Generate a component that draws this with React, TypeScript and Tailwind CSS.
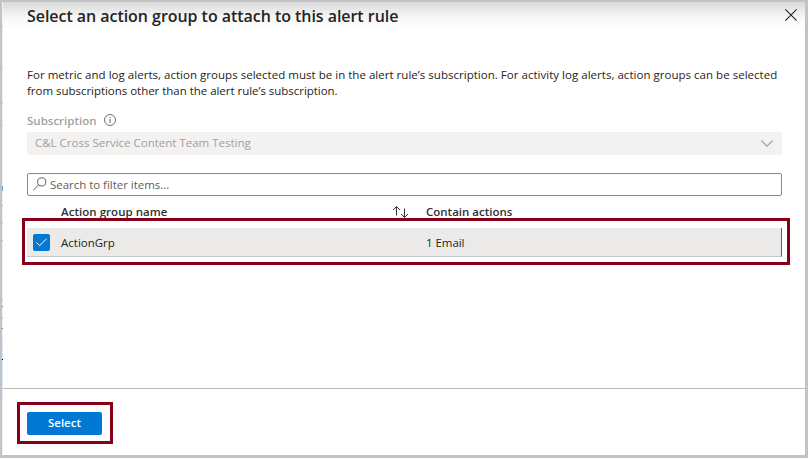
import type { ReactNode } from "react";

const SLIVER_MARKS = [
  "top-[24px] h-px bg-[#c8c8c8]",
  "top-[66px] h-px bg-[#c8c8c8]",
  "top-[101px] h-px bg-[#c8c8c8]",
  "top-[123px] h-px bg-[#c8c8c8]",
  "top-[184px] h-[5px] bg-[#4c9fe0]",
  "top-[203px] h-px bg-[#b0b0b0]",
  "top-[220px] h-[2px] bg-[#b5d8f5]",
  "top-[238px] h-px bg-[#b0b0b0]",
  "top-[297px] h-px bg-[#b0b0b0]",
  "top-[304px] h-px bg-[#777777]",
  "top-[315px] h-[2px] bg-[#cfcfcf]",
  "top-[326px] h-px bg-[#777777]",
  "top-[336px] h-[60px] bg-[#dbe8f5]",
  "top-[357px] h-px bg-black",
];

function PageSliver() {
  return (
    <div className="relative w-px shrink-0 bg-[#f1f1f1]">
      {SLIVER_MARKS.map((mark) => (
        <span key={mark} className={`absolute left-0 w-px ${mark}`} />
      ))}
    </div>
  );
}

function CloseIcon() {
  return (
    <svg className="h-3 w-3" viewBox="0 0 12 12" fill="none" stroke="#222" strokeWidth="1.1">
      <path d="M0.4 0.4 11.6 11.6M11.6 0.4 0.4 11.6" />
    </svg>
  );
}

function InfoIcon() {
  return (
    <svg className="h-3 w-3" viewBox="0 0 12 12" fill="none" stroke="#605e5c">
      <circle cx="6" cy="6" r="5.5" strokeWidth="0.9" />
      <path d="M6 5v4M6 3v1.1" strokeWidth="1" />
    </svg>
  );
}

function ChevronIcon() {
  return (
    <svg className="h-[7px] w-3" viewBox="0 0 12 7" fill="none" stroke="#a19f9d" strokeWidth="1.1">
      <path d="M0.4 0.5 6 6.1 11.6 0.5" />
    </svg>
  );
}

function SearchIcon() {
  return (
    <svg className="h-[14px] w-[14px]" viewBox="0 0 14 14" fill="none" stroke="#605e5c" strokeWidth="1">
      <circle cx="8.7" cy="4.9" r="4.1" />
      <path d="M5.8 7.8 0.5 13" />
    </svg>
  );
}

function SortIcon() {
  return (
    <svg className="h-3 w-4" viewBox="0 0 16 12" fill="none" stroke="#323130" strokeWidth="1">
      <path d="M4.5 9.5V0.8M1 4 4.5 0.6 8 4" />
      <path d="M12.5 2.5v8.7M9 8l3.5 3.4L16 8" />
    </svg>
  );
}

function CheckIcon() {
  return (
    <svg className="h-[9px] w-[11px]" viewBox="0 0 11 9" fill="none" stroke="#fff" strokeWidth="1">
      <path d="M0.4 4.4 3.7 7.6 10.6 0.8" />
    </svg>
  );
}

function Highlight({ className, children }: { className: string; children: ReactNode }) {
  return <div className={`border-[3px] border-[#86001a] ${className}`}>{children}</div>;
}

export default function App() {
  return (
    <div className="h-[460px] w-[808px] bg-white font-['Open_Sans','Noto_Sans',sans-serif] text-[11.5px] leading-4 text-[#252423]">
      <div className="flex h-[458px] border-2 border-r-[3px] border-b-[3px] border-[#c3c3c3]">
        <PageSliver />
        <section className="flex min-w-0 flex-1 flex-col">
          <header className="flex h-[65px] shrink-0 justify-between bg-linear-to-b from-[#dadada] via-[#f6f6f6] via-[15px] to-white to-[26px] pr-2 pl-6">
            <h1 className="mt-[3px] text-[16px] leading-[22px] font-semibold tracking-[-0.045px] whitespace-nowrap text-[#252423]">
              Select an action group to attach to this alert rule
            </h1>
            <button className="mt-[7px] h-3" aria-label="Close">
              <CloseIcon />
            </button>
          </header>

          <main className="flex flex-1 flex-col pr-[23px] pl-6">
            <p className="whitespace-nowrap">
              <span className="tracking-[0.025px]">
                For metric and log alerts, action groups selected must be in the alert rule’s subscription. For activity
                log alerts, action groups can be selected
              </span>
              <br />
              <span className="tracking-[-0.03px]">
                from subscriptions other than the alert rule’s subscription.
              </span>
            </p>

            <div className="mt-[14px] flex h-[19px] items-start gap-[7px] font-semibold text-[#a19f9d]">
              <span>Subscription</span>
              <span className="mt-px">
                <InfoIcon />
              </span>
            </div>
            <div className="flex h-[23px] items-center justify-between rounded-[2px] bg-[#f3f2f1] pr-[9px] pl-2 text-[#a19f9d]">
              <span className="pb-0.5">C&amp;L Cross Service Content Team Testing</span>
              <ChevronIcon />
            </div>

            <div className="mt-[18px] flex h-[23px] items-center gap-[3px] rounded-[2px] border border-[#8a8886] pl-[5px] text-[#605e5c]">
              <span className="-mt-px">
                <SearchIcon />
              </span>
              <span className="tracking-[-0.03px]">Search to filter items...</span>
            </div>

            <div className="mt-2 flex h-[14px] pl-[34px] font-semibold whitespace-nowrap text-[#323130]">
              <span className="w-[331px] tracking-[0.04px]">Action group name</span>
              <span className="mt-0.5 w-[34px]">
                <SortIcon />
              </span>
              <span>Contain actions</span>
            </div>
            <Highlight className="-mr-2 -ml-[5px] h-[47px] pt-[7px] pr-[5px] pl-0.5">
              <div className="flex h-[29px] items-center border-r border-b border-r-[#605e5c] border-b-[#c8c8c8] bg-[#ebeae8] pl-1.5">
                <span className="flex h-[17px] w-[17px] items-center justify-center rounded-[2px] bg-[#0078d4]">
                  <CheckIcon />
                </span>
                <span className="ml-[11px] w-[366px] pt-0.5">ActionGrp</span>
                <span className="-ml-px pt-0.5 tracking-[-0.05px]">1 Email</span>
              </div>
            </Highlight>
          </main>

          <footer className="h-[67px] shrink-0 border-t border-[#b8b8b8] pt-[13px] pl-[14px]">
            <Highlight className="h-[42px] w-[96px] px-[7px] pt-[7px]">
              <button className="flex h-[23px] w-[75px] items-center justify-center rounded-[2px] bg-[#0078d4] pb-0.5 font-semibold text-white">
                Select
              </button>
            </Highlight>
          </footer>
        </section>
      </div>
    </div>
  );
}
